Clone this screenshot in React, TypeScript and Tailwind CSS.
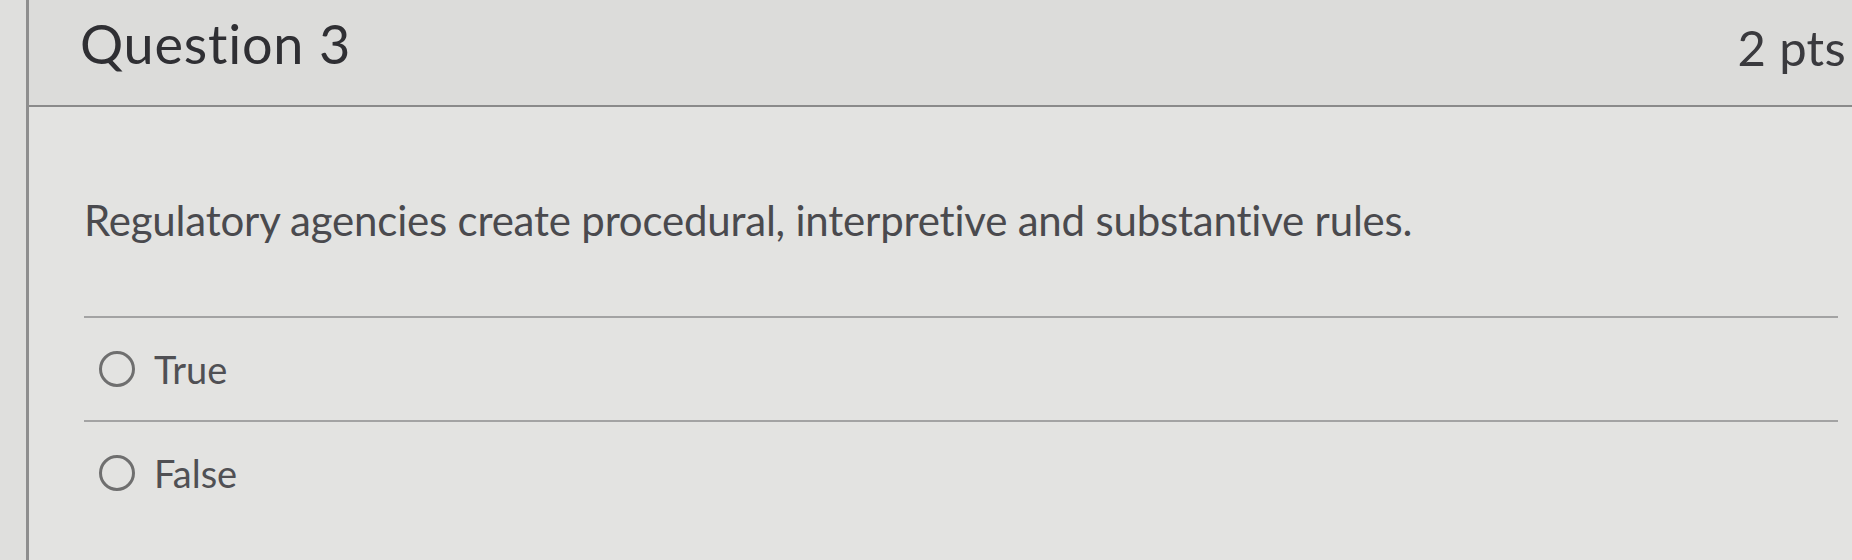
import React from 'react'

const answers = ['True', 'False']

function Radio() {
  return <span className="block w-[36px] h-[36px] rounded-full border-[3px] border-[#6f6f6f] shrink-0" />
}

export default function App() {
  return (
    <div
      className="w-full h-[560px] flex bg-[#e3e3e1] overflow-hidden"
      style={{ fontFamily: 'Lato, "Open Sans", sans-serif' }}
    >
      {/* side gutter */}
      <div className="w-[26px] shrink-0 bg-[#dfdfdd]" />

      <div className="flex-1 flex flex-col border-l-[3px] border-[#8e8e8e]">
        {/* question header */}
        <div className="h-[107px] shrink-0 flex items-start justify-between bg-[#dcdcda] border-b-2 border-[#8a8a8a] pl-[51px] pr-[6px]">
          <h2 className="text-[54px] leading-none text-[#2f2f33] mt-[17px] tracking-[0.8px]">Question 3</h2>
          <span className="text-[49px] leading-none text-[#3a3a3e] mt-[23px] tracking-[0.3px]">2 pts</span>
        </div>

        <div className="flex-1 flex flex-col pl-[55px] pr-[14px]">
          <p className="text-[42px] leading-none text-[#4a4a4e] mt-[92px] tracking-[-0.2px]">
            Regulatory agencies create procedural, interpretive and substantive rules.
          </p>

          <div className="mt-[75px]">
            {answers.map((a) => (
              <div key={a} className="border-t-2 border-[#a3a3a3] h-[104px] flex items-start">
                <label className="flex items-center gap-[19px] pl-[15px] mt-[32px]">
                  <Radio />
                  <span className="text-[38px] leading-none text-[#505054]">{a}</span>
                </label>
              </div>
            ))}
          </div>
        </div>
      </div>
    </div>
  )
}
